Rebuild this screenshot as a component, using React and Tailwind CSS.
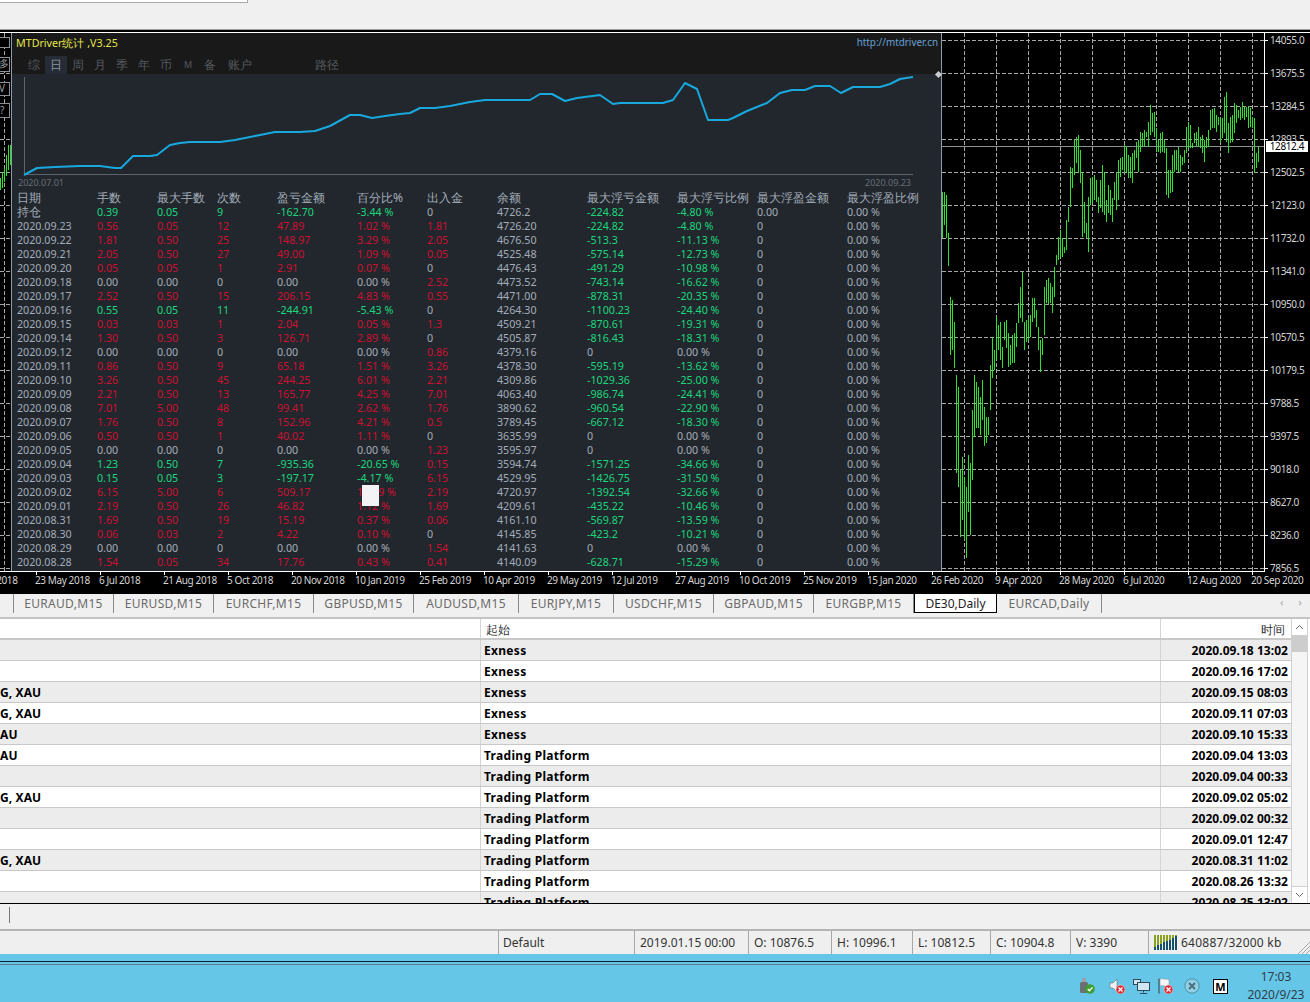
const stats = [
  ['2020.09.23', '0.56', '0.05', '12', '47.89', '1.02 %', '1.81', '4726.20', '-224.82', '-4.80 %'],
  ['2020.09.22', '1.81', '0.50', '25', '148.97', '3.29 %', '2.05', '4676.50', '-513.3', '-11.13 %'],
  ['2020.09.21', '2.05', '0.50', '27', '49.00', '1.09 %', '0.05', '4525.48', '-575.14', '-12.73 %'],
  ['2020.09.20', '0.05', '0.05', '1', '2.91', '0.07 %', '0', '4476.43', '-491.29', '-10.98 %'],
  ['2020.09.18', '0.00', '0.00', '0', '0.00', '0.00 %', '2.52', '4473.52', '-743.14', '-16.62 %'],
  ['2020.09.17', '2.52', '0.50', '15', '206.15', '4.83 %', '0.55', '4471.00', '-878.31', '-20.35 %'],
  ['2020.09.16', '0.55', '0.05', '11', '-244.91', '-5.43 %', '0', '4264.30', '-1100.23', '-24.40 %'],
  ['2020.09.15', '0.03', '0.03', '1', '2.04', '0.05 %', '1.3', '4509.21', '-870.61', '-19.31 %'],
  ['2020.09.14', '1.30', '0.50', '3', '126.71', '2.89 %', '0', '4505.87', '-816.43', '-18.31 %'],
  ['2020.09.12', '0.00', '0.00', '0', '0.00', '0.00 %', '0.86', '4379.16', '0', '0.00 %'],
  ['2020.09.11', '0.86', '0.50', '9', '65.18', '1.51 %', '3.26', '4378.30', '-595.19', '-13.62 %'],
  ['2020.09.10', '3.26', '0.50', '45', '244.25', '6.01 %', '2.21', '4309.86', '-1029.36', '-25.00 %'],
  ['2020.09.09', '2.21', '0.50', '13', '165.77', '4.25 %', '7.01', '4063.40', '-986.74', '-24.41 %'],
  ['2020.09.08', '7.01', '5.00', '48', '99.41', '2.62 %', '1.76', '3890.62', '-960.54', '-22.90 %'],
  ['2020.09.07', '1.76', '0.50', '8', '152.96', '4.21 %', '0.5', '3789.45', '-667.12', '-18.30 %'],
  ['2020.09.06', '0.50', '0.50', '1', '40.02', '1.11 %', '0', '3635.99', '0', '0.00 %'],
  ['2020.09.05', '0.00', '0.00', '0', '0.00', '0.00 %', '1.23', '3595.97', '0', '0.00 %'],
  ['2020.09.04', '1.23', '0.50', '7', '-935.36', '-20.65 %', '0.15', '3594.74', '-1571.25', '-34.66 %'],
  ['2020.09.03', '0.15', '0.05', '3', '-197.17', '-4.17 %', '6.15', '4529.95', '-1426.75', '-31.50 %'],
  ['2020.09.02', '6.15', '5.00', '6', '509.17', '12.09 %', '2.19', '4720.97', '-1392.54', '-32.66 %'],
  ['2020.09.01', '2.19', '0.50', '26', '46.82', '1.12 %', '1.69', '4209.61', '-435.22', '-10.46 %'],
  ['2020.08.31', '1.69', '0.50', '19', '15.19', '0.37 %', '0.06', '4161.10', '-569.87', '-13.59 %'],
  ['2020.08.30', '0.06', '0.03', '2', '4.22', '0.10 %', '0', '4145.85', '-423.2', '-10.21 %'],
  ['2020.08.29', '0.00', '0.00', '0', '0.00', '0.00 %', '1.54', '4141.63', '0', '0.00 %'],
  ['2020.08.28', '1.54', '0.05', '34', '17.76', '0.43 %', '0.41', '4140.09', '-628.71', '-15.29 %'],
];

const headers = ['日期', '手数', '最大手数', '次数', '盈亏金额', '百分比%', '出入金', '余额', '最大浮亏金额', '最大浮亏比例', '最大浮盈金额', '最大浮盈比例'];
const statCols = 'grid grid-cols-[80px_60px_60px_60px_80px_70px_70px_90px_90px_80px_90px_80px] pl-[5px]';

const equity = '24,175 37,168 55,167 80,166 100,166 115,168 121,168 133,156 150,156 157,155 170,145 180,143 190,142 220,142 235,140 255,136 275,132 300,132 315,131 330,126 350,115 360,115 372,118 385,116 400,114 410,113 420,108 435,108 450,106 470,102 485,100 530,100 540,94 552,94 565,101 577,98 600,95 613,104 620,103 663,103 673,100 685,83 697,89 708,120 728,120 733,118 747,111 767,103 780,93 792,90 805,90 815,86 830,86 841,93 853,87 880,87 890,84 900,79 913,77';

// [x, high, low] of each daily bar, picture coordinates
const bars = [
  [942,192,238],[944,192,225],[946,195,238],[948,233,266],[950,297,355],[952,300,350],[954,322,368],[956,375,473],[958,387,487],[960,470,537],[962,457,520],[964,477,540],[966,487,558],[968,455,512],[970,463,535],[972,410,480],[974,375,437],[976,382,428],[978,387,428],[980,397,435],[982,380,420],[984,407,446],[986,417,443],[988,417,435],[990,365,410],[992,337,378],[994,350,370],[996,317,360],[998,325,350],[1000,322,360],[1002,347,368],[1004,322,340],[1006,320,348],[1008,333,367],[1010,345,365],[1012,335,363],[1014,333,363],[1016,323,347],[1018,303,323],[1020,287,318],[1022,272,322],[1024,322,350],[1026,320,342],[1028,318,340],[1030,315,337],[1032,298,322],[1034,298,318],[1036,310,327],[1038,327,350],[1040,340,372],[1042,338,355],[1044,287,335],[1046,280,303],[1048,278,305],[1050,283,303],[1052,287,313],[1054,267,297],[1056,255,265],[1058,237,260],[1060,230,257],[1062,238,257],[1064,247,253],[1066,220,250],[1068,207,222],[1070,167,207],[1072,168,188],[1074,140,175],[1076,137,163],[1078,135,173],[1080,150,183],[1082,173,237],[1084,202,233],[1086,223,238],[1088,197,252],[1090,178,205],[1092,177,203],[1094,175,200],[1096,180,202],[1098,197,213],[1100,180,208],[1102,165,212],[1104,172,215],[1106,200,222],[1108,185,213],[1110,190,215],[1112,198,222],[1114,182,200],[1116,173,210],[1118,160,200],[1120,158,177],[1122,157,170],[1124,145,173],[1126,147,173],[1128,155,178],[1130,157,178],[1132,153,183],[1134,150,170],[1136,142,158],[1138,140,172],[1140,132,152],[1142,133,147],[1144,130,147],[1146,132,137],[1148,122,147],[1150,105,135],[1152,113,132],[1154,112,137],[1156,128,152],[1158,140,152],[1160,133,153],[1162,132,152],[1164,140,153],[1166,148,195],[1168,170,198],[1170,170,193],[1172,155,192],[1174,150,172],[1176,150,170],[1178,147,172],[1180,155,172],[1182,157,165],[1184,150,163],[1186,127,153],[1188,122,148],[1190,125,148],[1192,143,148],[1194,133,143],[1196,132,147],[1198,127,147],[1200,137,148],[1202,135,153],[1204,140,162],[1206,137,148],[1208,130,147],[1210,110,130],[1212,109,128],[1214,108,128],[1216,115,132],[1218,117,125],[1220,118,143],[1222,118,138],[1224,97,133],[1226,92,142],[1228,123,153],[1230,117,143],[1232,115,142],[1234,103,133],[1236,105,123],[1238,110,118],[1240,107,120],[1242,102,118],[1244,107,120],[1246,107,117],[1248,106,128],[1250,108,127],[1252,117,128],[1254,118,173],[1256,153,168],[1258,147,162],
];

const prices = ['14055.0', '13675.5', '13284.5', '12893.5', '12502.5', '12123.0', '11732.0', '11341.0', '10950.0', '10570.5', '10179.5', '9788.5', '9397.5', '9018.0', '8627.0', '8236.0', '7856.5'];
const gridY = prices.map((_, i) => 40.5 + i * 33);
const gridX = [964.5, 996.5, 1028.5, 1060.5, 1092.5, 1124.5, 1156.5, 1188.5, 1220.5, 1252.5];

const dates = ['4 Apr 2018', '23 May 2018', '6 Jul 2018', '21 Aug 2018', '5 Oct 2018', '20 Nov 2018', '10 Jan 2019', '25 Feb 2019', '10 Apr 2019', '29 May 2019', '12 Jul 2019', '27 Aug 2019', '10 Oct 2019', '25 Nov 2019', '15 Jan 2020', '26 Feb 2020', '9 Apr 2020', '28 May 2020', '6 Jul 2020', '12 Aug 2020', '20 Sep 2020'];

const panelTabs = [
  ['综', 'w-[22px]'], ['日', 'w-[22px] bg-[#262c35] text-[#8b95a0]'], ['周', 'w-[22px]'], ['月', 'w-[22px]'], ['季', 'w-[22px]'],
  ['年', 'w-[22px]'], ['币', 'w-[22px]'], ['M', 'w-[22px] text-[9px]'], ['备', 'w-[22px]'], ['账户', 'w-[32px] ml-[3px]'], ['路径', 'w-[32px] ml-[55px]'],
];

const tabs = [
  ['EURAUD,M15', 'w-[100px]'], ['EURUSD,M15', 'w-[100px]'], ['EURCHF,M15', 'w-[100px]'], ['GBPUSD,M15', 'w-[100px]'], ['AUDUSD,M15', 'w-[105px]'],
  ['EURJPY,M15', 'w-[95px]'], ['USDCHF,M15', 'w-[100px]'], ['GBPAUD,M15', 'w-[100px]'], ['EURGBP,M15', 'w-[100px]'],
];

const news = [
  ['', 'Exness', '2020.09.18 13:02'],
  ['', 'Exness', '2020.09.16 17:02'],
  ['G, XAU', 'Exness', '2020.09.15 08:03'],
  ['G, XAU', 'Exness', '2020.09.11 07:03'],
  ['AU', 'Exness', '2020.09.10 15:33'],
  ['AU', 'Trading Platform', '2020.09.04 13:03'],
  ['', 'Trading Platform', '2020.09.04 00:33'],
  ['G, XAU', 'Trading Platform', '2020.09.02 05:02'],
  ['', 'Trading Platform', '2020.09.02 00:32'],
  ['', 'Trading Platform', '2020.09.01 12:47'],
  ['G, XAU', 'Trading Platform', '2020.08.31 11:02'],
  ['', 'Trading Platform', '2020.08.26 13:32'],
  ['', 'Trading Platform', '2020.08.25 13:02'],
];

const statusCells = [
  ['2019.01.15 00:00', 'w-[114px]'], ['O: 10876.5', 'w-[83px]'], ['H: 10996.1', 'w-[81px]'], ['L: 10812.5', 'w-[78px]'], ['C: 10904.8', 'w-[80px]'], ['V: 3390', 'w-[78px]'],
];

const RED = 'text-[#cc1030]';
const GREEN = 'text-[#1dd67c]';
const GRAY = 'text-[#a3adb8]';

function plColor(row) {
  if (row[4].startsWith('-')) return GREEN;
  return row[4] === '0.00' ? GRAY : RED;
}

function StatRow({ row }) {
  const main = plColor(row);
  const dd = row[8] === '0' ? GRAY : GREEN;
  return (
    <div className={`${statCols} h-[14px] leading-[14px] text-[10.7px]`}>
      <span className={GRAY}>{row[0]}</span>
      <span className={main}>{row[1]}</span>
      <span className={main}>{row[2]}</span>
      <span className={main}>{row[3]}</span>
      <span className={main}>{row[4]}</span>
      <span className={main}>{row[5]}</span>
      <span className={row[6] === '0' ? GRAY : RED}>{row[6]}</span>
      <span className={GRAY}>{row[7]}</span>
      <span className={dd}>{row[8]}</span>
      <span className={dd}>{row[9]}</span>
      <span className={GRAY}>0</span>
      <span className={GRAY}>0.00 %</span>
    </div>
  );
}

function StatsPanel() {
  return (
    <div className="relative w-[931px] shrink-0 bg-[#22272e] border-x border-[#8c9cab]">
      <div className="h-[41px] bg-[#191919]">
        <div className="flex justify-between h-[20px] pl-1 pr-[3px] items-center text-[10.7px] leading-none">
          <span className="text-[#e6e64c]">MTDriver统计 ,V3.25</span>
          <span className="text-[#6aa2d8] text-[9.9px]">http://mtdriver.cn</span>
        </div>
        <div className="flex h-[18px] pl-[11px] mt-[3px] text-[12px] leading-[18px] text-[#55595f]">
          {panelTabs.map(([label, cls]) => (
            <span key={label} className={`${cls} text-center`}>{label}</span>
          ))}
        </div>
      </div>
      <svg width="929" height="117" viewBox="12 74 929 117" className="block">
        <line x1="24.5" y1="77" x2="24.5" y2="175" stroke="#5d646c" />
        <line x1="24" y1="174.5" x2="913" y2="174.5" stroke="#5d646c" />
        <polyline points={equity} fill="none" stroke="#18a8de" strokeWidth="2" strokeLinejoin="round" />
        <text x="18" y="186" fontSize="9" fill="#666e76">2020.07.01</text>
        <text x="911" y="186" fontSize="9" fill="#666e76" textAnchor="end">2020.09.23</text>
      </svg>
      <div className={`${statCols} h-[14px] leading-[14px] text-[12px] text-[#a3adb8]`}>
        {headers.map((h) => <span key={h} className="whitespace-nowrap">{h}</span>)}
      </div>
      <div className={`${statCols} h-[14px] leading-[14px] text-[10.7px]`}>
        <span className={`${GRAY} text-[12px]`}>持仓</span>
        <span className={GREEN}>0.39</span>
        <span className={GREEN}>0.05</span>
        <span className={GREEN}>9</span>
        <span className={GREEN}>-162.70</span>
        <span className={GREEN}>-3.44 %</span>
        <span className={GRAY}>0</span>
        <span className={GRAY}>4726.2</span>
        <span className={GREEN}>-224.82</span>
        <span className={GREEN}>-4.80 %</span>
        <span className={GRAY}>0.00</span>
        <span className={GRAY}>0.00 %</span>
      </div>
      {stats.map((row) => <StatRow key={row[0]} row={row} />)}
      <div className="absolute left-[350px] top-[452px] w-[17px] h-[21px] bg-[#f3f3f5]" />
      <div className="absolute right-0 top-[39px] w-[5px] h-[5px] rotate-45 bg-[#c8ccd0]" />
    </div>
  );
}

function LeftStrip() {
  return (
    <svg width="11" height="538" viewBox="0 33 11 538" className="block shrink-0">
      {gridY.map((y) => <line key={y} x1="0" y1={y} x2="11" y2={y} stroke="#a8a8a8" strokeDasharray="4 2" />)}
      <line x1="4.5" y1="33" x2="4.5" y2="571" stroke="#a8a8a8" strokeDasharray="4 2" />
      <g stroke="#2fe02f">
        <line x1="0.5" y1="178" x2="0.5" y2="190" />
        <line x1="2.5" y1="172" x2="2.5" y2="188" />
        <line x1="4.5" y1="168" x2="4.5" y2="182" />
        <line x1="6.5" y1="155" x2="6.5" y2="176" />
        <line x1="8.5" y1="145" x2="8.5" y2="170" />
        <line x1="10.5" y1="145" x2="10.5" y2="165" />
      </g>
      {[[37, 10], [57, 14], [82, 13], [103, 14]].map(([y, h]) => (
        <rect key={y} x="-4" y={y + 0.5} width="13.5" height={h} fill="#000" stroke="#8a8f94" />
      ))}
      <g fontSize="10" fill="#9a9fa4">
        <text x="-1" y="67">多</text>
        <text x="-1" y="92">V</text>
        <text x="0" y="114">?</text>
      </g>
    </svg>
  );
}

function PriceChart() {
  return (
    <svg width="322" height="538" viewBox="942 33 322 538" className="block shrink-0">
      {gridY.map((y) => <line key={y} x1="942" y1={y} x2="1264" y2={y} stroke="#a8a8a8" strokeDasharray="4 2" />)}
      {gridX.map((x) => <line key={x} x1={x} y1="33" x2={x} y2="571" stroke="#a8a8a8" strokeDasharray="4 2" />)}
      <line x1="942" y1="146.5" x2="1264" y2="146.5" stroke="#8a8f94" />
      <g stroke="#2fe02f">
        {bars.map(([x, hi, lo]) => <line key={x} x1={x + 0.5} y1={hi} x2={x + 0.5} y2={lo} />)}
      </g>
    </svg>
  );
}

function PriceAxis() {
  return (
    <div className="relative flex-1 border-l border-white text-[10px] tracking-[-0.4px] text-[#d4d4d4]">
      {prices.map((p) => (
        <div key={p} className="flex items-start h-[33px] shrink-0">
          <div className="w-[3px] h-px bg-white mt-[7px]" />
          <span className="ml-[2px] leading-[15px]">{p}</span>
        </div>
      ))}
      <div className="absolute left-[1px] top-[108px] w-[42px] h-[11px] bg-white text-black leading-[11px] text-right pr-[4px]">12812.4</div>
    </div>
  );
}

function DateAxis() {
  return (
    <div className="h-[22px] overflow-hidden text-[10px] tracking-[-0.4px] text-[#d4d4d4]">
      <div className="w-[1265px] h-px bg-white" />
      <div className="flex -ml-[28px]">
        {dates.map((d) => (
          <div key={d} className="w-16 shrink-0">
            <div className="w-px h-[3px] bg-white" />
            <div className="-ml-px leading-[11px] whitespace-nowrap">{d}</div>
          </div>
        ))}
      </div>
    </div>
  );
}

function TabBar() {
  return (
    <div className="flex h-[25px] pl-[13px] bg-[#f0f0f0] border-b-2 border-[#c4c4c4] text-[12px] text-[#6b6b6b] font-['Open_Sans','Noto_Sans',sans-serif] tracking-[0.3px]">
      <div className="flex h-[19px] items-center border-l border-[#8a8a8a]">
        {tabs.map(([t, w]) => (
          <div key={t} className={`${w} h-[19px] leading-[20px] text-center border-r border-[#8a8a8a]`}>{t}</div>
        ))}
      </div>
      <div className="w-[83px] h-[19px] leading-[20px] text-center bg-white text-[#222] border-x border-b border-black tracking-normal">DE30,Daily</div>
      <div className="w-[105px] h-[19px] leading-[20px] text-center border-r border-[#8a8a8a]">EURCAD,Daily</div>
      <div className="flex gap-[15px] ml-auto mr-[8px] h-[18px] leading-[16px] text-[10px] text-[#9a9a9a]">
        <span>‹</span>
        <span>›</span>
      </div>
    </div>
  );
}

function NewsTable() {
  return (
    <div className="flex h-[285px] overflow-hidden border-b border-black bg-white text-[12px] font-['Open_Sans','Noto_Sans','Noto_Sans_CJK_SC',sans-serif]">
      <div className="w-[1291px] shrink-0">
        <div className="flex h-[21px] leading-[21px] border-b-2 border-[#c8c8c8] text-[#333]">
          <div className="w-[481px] border-r border-[#d4d4d4]" />
          <div className="w-[680px] pl-[5px] border-r border-[#d4d4d4]">起始</div>
          <div className="flex-1 text-right pr-[6px]">时间</div>
        </div>
        {news.map((n, i) => (
          <div key={n[2]} className={`flex h-[21px] leading-[21px] font-bold text-black border-b border-[#c8c8c8] ${i % 2 === 0 ? 'bg-[#ececec]' : 'bg-white'}`}>
            <div className="w-[481px] border-r border-[#d4d4d4] tracking-[0.1px]">{n[0]}</div>
            <div className="w-[680px] pl-[3px] border-r border-[#d4d4d4] tracking-[0.3px]">{n[1]}</div>
            <div className="flex-1 text-right pr-[3px] tracking-[0.05px]">{n[2]}</div>
          </div>
        ))}
      </div>
      <div className="w-[17px] flex flex-col border-x border-[#d0d0d0] bg-[#f5f5f5]">
        <div className="flex h-[17px] items-center justify-center bg-white border-b border-[#d0d0d0]">
          <svg width="9" height="6" viewBox="0 0 9 6" fill="none" stroke="#666"><path d="M1 5l3.5-3.5L8 5" /></svg>
        </div>
        <div className="h-[16px] bg-[#cdcdcd]" />
        <div className="flex-1" />
        <div className="flex h-[17px] items-center justify-center bg-white border-t border-[#d0d0d0]">
          <svg width="9" height="6" viewBox="0 0 9 6" fill="none" stroke="#666"><path d="M1 1l3.5 3.5L8 1" /></svg>
        </div>
      </div>
    </div>
  );
}

function MemoryIcon() {
  const heights = [3, 5, 6, 8, 9, 10, 12, 14];
  return (
    <svg width="24" height="15" viewBox="0 0 24 15" className="shrink-0">
      {heights.map((h, i) => (
        <g key={i}>
          <rect x={i * 3} y="0" width="2" height={15 - h} fill="#8aa020" />
          <rect x={i * 3} y={15 - h} width="2" height={h} fill="#16506c" />
        </g>
      ))}
    </svg>
  );
}

function StatusBar() {
  return (
    <div className="flex h-[23px] bg-[#efefef] text-[12px] leading-[23px] text-[#333] font-['Open_Sans','Noto_Sans',sans-serif]">
      <div className="w-[498px] shrink-0" />
      <div className="w-[136px] pl-[4px] border-l border-[#a8a8a8]">Default</div>
      {statusCells.map(([t, w]) => (
        <div key={t} className={`${w} pl-[5px] border-l border-[#a8a8a8] whitespace-nowrap`}>{t}</div>
      ))}
      <div className="flex items-center gap-[3px] pl-[5px] border-l border-[#a8a8a8] whitespace-nowrap tracking-[0.25px]">
        <MemoryIcon />
        640887/32000 kb
      </div>
      <svg width="13" height="13" viewBox="0 0 13 13" className="ml-auto mt-[10px]" stroke="#a8a8a8" fill="none">
        <path d="M1 13L13 1M5 13l8-8M9 13l4-4" />
      </svg>
    </div>
  );
}

function RedBadge() {
  return (
    <g>
      <circle cx="11.5" cy="11.5" r="4.5" fill="#d9303a" stroke="#f4d0d0" strokeWidth="0.6" />
      <path d="M9.5 9.5l4 4M13.5 9.5l-4 4" stroke="#fff" strokeWidth="1.2" />
    </g>
  );
}

function Tray() {
  return (
    <div className="flex flex-1 items-center justify-end pt-[3px] pr-[5px] text-[12px] leading-[18px] text-[#2c3e4a] font-['Open_Sans','Noto_Sans',sans-serif]">
      <svg width="16" height="16" viewBox="0 0 16 16" className="shrink-0">
        <rect x="3" y="0" width="4" height="4" fill="#9aa0a4" />
        <rect x="1" y="4" width="8" height="11" rx="1.5" fill="#6a7074" />
        <circle cx="11" cy="11" r="4.8" fill="#3f9e32" />
        <path d="M8.8 11l1.7 1.8 3-3.4" stroke="#fff" strokeWidth="1.3" fill="none" />
      </svg>
      <svg width="16" height="16" viewBox="0 0 16 16" className="shrink-0 ml-[14px]">
        <path d="M1 5h3l4-4v13l-4-4H1z" fill="#f2f2f2" stroke="#60707a" strokeWidth="0.6" />
        <RedBadge />
      </svg>
      <svg width="17" height="15" viewBox="0 0 17 15" fill="#cfe8f2" stroke="#2f4a58" className="shrink-0 ml-[8px]">
        <rect x="0.5" y="0.5" width="7" height="5" />
        <rect x="4.5" y="3.5" width="12" height="8" />
        <path d="M10.5 11.5v2M7 14.5h7" fill="none" />
      </svg>
      <svg width="16" height="16" viewBox="0 0 16 16" className="shrink-0 ml-[7px]">
        <path d="M2 0.5v15" stroke="#40505a" strokeWidth="1.2" />
        <path d="M3 1c3-1 6 1 9 0v7c-3 1-6-1-9 0z" fill="#f6f6f6" stroke="#7a8a94" strokeWidth="0.5" />
        <RedBadge />
      </svg>
      <svg width="16" height="16" viewBox="0 0 16 16" className="shrink-0 ml-[11px]">
        <circle cx="8" cy="8" r="7.2" fill="#8fd0e6" stroke="#4a90aa" />
        <path d="M5 5l6 6M11 5l-6 6" stroke="#4d6f80" strokeWidth="2" />
      </svg>
      <div className="flex w-[15px] h-[15px] ml-[13px] items-center justify-center bg-white border border-black text-[11px] font-bold leading-none text-black">M</div>
      <div className="w-[58px] ml-[19px] text-center whitespace-nowrap">
        <div>17:03</div>
        <div>2020/9/23</div>
      </div>
    </div>
  );
}

export default function App() {
  return (
    <div className="w-[1310px] h-[1002px] overflow-hidden bg-[#f0f0f0] font-['Liberation_Sans','Noto_Sans_CJK_SC',sans-serif]">
      <div className="h-[30px] border-b border-[#9c9c9c]">
        <div className="w-[248px] h-[3px] bg-white border-r border-b border-[#a8a8a8]" />
      </div>
      <div className="h-[564px] bg-black pt-[2px]">
        <div className="flex h-[539px] border-t border-white">
          <LeftStrip />
          <StatsPanel />
          <PriceChart />
          <PriceAxis />
        </div>
        <DateAxis />
      </div>
      <TabBar />
      <NewsTable />
      <div className="relative h-[27px] border-b-2 border-[#b4b4b4]">
        <div className="absolute left-[9px] top-[3px] w-px h-[16px] bg-[#777]" />
      </div>
      <StatusBar />
      <div className="flex flex-col h-[48px] bg-[#66c6e8]">
        <div className="h-[11px] shrink-0 border-b border-[#5c7f8e]">
          <div className="h-[8px] border-b border-[#123]" />
        </div>
        <Tray />
      </div>
    </div>
  );
}
